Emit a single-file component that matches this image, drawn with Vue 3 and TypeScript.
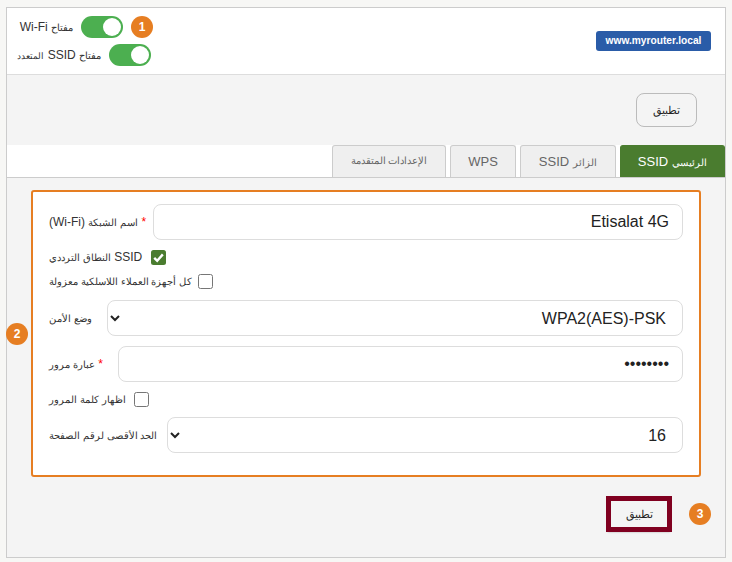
<script setup lang="ts">
const tabs: { ar: string; latin: string; active?: boolean; cls: string }[] = [
  { ar: 'الإعدادات المتقدمة', latin: '', cls: 'tab-adv' },
  { ar: '', latin: 'WPS', cls: 'tab-wps' },
  { ar: 'الزائر', latin: 'SSID', cls: 'tab-guest' },
  { ar: 'الرئيسي', latin: 'SSID', active: true, cls: 'tab-main' },
]
</script>

<template>
  <div class="card">
    <header class="head">
      <div class="switches">
        <div class="switch-row">
          <span class="sw-label sw-a" dir="rtl"><span class="ar">مفتاح</span> Wi-Fi</span>
          <span class="toggle"><span class="knob"></span></span>
          <span class="badge">1</span>
        </div>
        <div class="switch-row">
          <span class="sw-label sw-b" dir="rtl"><span class="ar">مفتاح</span> SSID <span class="ar-narrow">المتعدد</span></span>
          <span class="toggle"><span class="knob"></span></span>
        </div>
      </div>
      <span class="pill">www.myrouter.local</span>
    </header>

    <div class="top-actions">
      <button class="btn" type="button"><span class="ar-btn">تطبيق</span></button>
    </div>

    <nav class="tabs">
      <div v-for="t in tabs" :key="t.cls" class="tab" :class="[t.cls, { active: t.active }]" dir="rtl">
        <span v-if="t.ar" class="ar">{{ t.ar }}</span>
        <span v-if="t.latin">{{ t.latin }}</span>
      </div>
    </nav>

    <section class="form">
      <span class="badge badge-2">2</span>

      <div class="row">
        <label class="lab lab-name" dir="rtl"><span class="star">*</span> <span class="ar">اسم الشبكة</span> (Wi-Fi)</label>
        <input class="field" dir="ltr" type="text" value="Etisalat 4G" />
      </div>

      <div class="check-row first">
        <span class="lab lab-band" dir="rtl">SSID <span class="ar">النطاق الترددي</span></span>
        <span class="check on">
          <svg viewBox="0 0 15 15" width="15" height="15"><path d="M3.2 7.8 6.2 10.8 11.8 4.4" fill="none" stroke="#fff" stroke-width="2.4" /></svg>
        </span>
      </div>

      <div class="check-row second">
        <span class="lab lab-iso ar" dir="rtl">كل أجهزة العملاء اللاسلكية معزولة</span>
        <span class="check"></span>
      </div>

      <div class="row">
        <label class="lab lab-sec ar" dir="rtl">وضع الأمن</label>
        <select class="field sel" dir="rtl"><option>WPA2(AES)-PSK</option></select>
      </div>

      <div class="row">
        <label class="lab lab-pass" dir="rtl"><span class="star">*</span> <span class="ar">عبارة مرور</span></label>
        <input class="field" type="password" value="12345678" />
      </div>

      <div class="check-row">
        <span class="lab lab-show ar" dir="rtl">اظهار كلمة المرور</span>
        <span class="check"></span>
      </div>

      <div class="row">
        <label class="lab lab-max ar" dir="rtl">الحد الأقصى لرقم الصفحة</label>
        <select class="field sel" dir="rtl"><option>16</option></select>
      </div>
    </section>

    <div class="foot">
      <button class="btn-focus" type="button"><span class="ar-btn">تطبيق</span></button>
      <span class="badge">3</span>
    </div>
  </div>
</template>

<style>
html, body { margin: 0; background: #f7f7f5; }
</style>

<style scoped>
.card {
  box-sizing: border-box;
  width: 720px;
  height: 551px;
  margin: 7px 0 0 6px;
  border: 1px solid #ccc;
  background: #f4f4f4;
  font-family: "Liberation Sans", Arial, sans-serif;
  font-size: 12px;
  color: #333;
}
.ar { font-size: 10.2px; }
.ar-narrow { font-size: 8.8px; }
.ar-btn { font-size: 11px; }
.head {
  box-sizing: border-box;
  height: 67px;
  padding: 8px 14px;
  display: flex;
  align-items: center;
  justify-content: space-between;
  background: #fff;
  border-bottom: 1px solid #ddd;
}
.switches { display: flex; flex-direction: column; gap: 6px; }
.switch-row { display: flex; align-items: center; height: 22px; gap: 8px; }
.sw-label { text-align: left; white-space: nowrap; line-height: 14px; }
.sw-a { width: 52px; }
.sw-b { width: 80px; }
.toggle {
  box-sizing: border-box;
  width: 42px;
  height: 22px;
  padding: 2px;
  border-radius: 11px;
  background: #4caf50;
  display: flex;
  justify-content: flex-end;
}
.knob { width: 18px; height: 18px; border-radius: 50%; background: #fff; }
.badge {
  width: 22px;
  height: 22px;
  border-radius: 50%;
  background: #e67e22;
  color: #fff;
  font-weight: 700;
  font-size: 12px;
  display: flex;
  align-items: center;
  justify-content: center;
  flex: none;
}
.pill {
  box-sizing: border-box;
  width: 115px;
  height: 20px;
  margin-top: -1px;
  border-radius: 3px;
  background: #2a5ca8;
  color: #fff;
  font-weight: 700;
  font-size: 10.2px;
  line-height: 20px;
  text-align: center;
  white-space: nowrap;
}
.top-actions {
  box-sizing: border-box;
  height: 70px;
  padding: 18px 28px 0 0;
  display: flex;
  justify-content: flex-end;
  align-items: flex-start;
}
.btn {
  box-sizing: border-box;
  width: 61px;
  height: 34px;
  border: 1px solid #bbb;
  border-radius: 8px;
  background: #f4f4f4;
  color: #222;
  font: 12px "Liberation Sans", Arial, sans-serif;
  padding: 0;
}
.tabs {
  box-sizing: border-box;
  height: 33px;
  background: #fff;
  border-bottom: 1px solid #ccc;
  display: flex;
  justify-content: flex-end;
  gap: 4px;
}
.tab {
  box-sizing: border-box;
  height: 32px;
  background: #efefef;
  border: 1px solid #ccc;
  border-bottom: none;
  border-radius: 3px 3px 0 0;
  color: #666;
  font-size: 13px;
  display: flex;
  align-items: baseline;
  padding-top: 8px;
  gap: 4px;
  justify-content: center;
  white-space: nowrap;
}
.tab-adv { width: 114px; padding-top: 9px; }
.tab-wps { width: 66px; }
.tab-guest { width: 96px; }
.tab-main { width: 105px; }
.tab.active { background: #4a7c2f; border-color: #4a7c2f; color: #fff; }
.form {
  position: relative;
  box-sizing: border-box;
  width: 670px;
  height: 287px;
  margin: 12px 0 0 24px;
  padding: 12px 16px 0;
  background: #fff;
  border: 2px solid #e67e22;
  border-radius: 3px;
  display: flex;
  flex-direction: column;
  gap: 10px;
}
.badge-2 { position: absolute; left: -27px; top: 131px; }
.row { display: flex; align-items: center; height: 36px; }
.lab { white-space: nowrap; text-align: left; flex: none; line-height: 15px; }
.lab-name { width: 104px; }
.lab-sec { width: 58px; }
.lab-pass { width: 69px; }
.lab-max { width: 118px; }
.lab-band { width: 97px; }
.lab-iso { width: 144px; }
.lab-show { width: 80px; }
.star { color: #f00; }
.field {
  flex: 1;
  min-width: 0;
  box-sizing: border-box;
  height: 36px;
  border: 1px solid #ddd;
  border-radius: 8px;
  background: #fff;
  color: #222;
  font: 16px "Liberation Sans", Arial, sans-serif;
  text-align: right;
  padding: 0 13px;
  outline: none;
}
.sel { padding: 0 12px 0 0; }
.check-row { display: flex; align-items: flex-start; gap: 5px; height: 15px; }
.check-row.first { height: 14px; }
.check-row.second { height: 16px; }
.check {
  box-sizing: border-box;
  width: 15px;
  height: 15px;
  border: 1px solid #767676;
  border-radius: 2.5px;
  background: #fff;
  flex: none;
}
.check.on { background: #4a7c2f; border: none; }
.check svg { display: block; }
.foot {
  margin-top: 19px;
  padding-right: 14px;
  display: flex;
  justify-content: flex-end;
  align-items: center;
  gap: 17px;
}
.btn-focus {
  box-sizing: border-box;
  width: 66px;
  height: 36px;
  border: 5px solid #800020;
  background: #f4f4f4;
  color: #222;
  font: 12px "Liberation Sans", Arial, sans-serif;
  padding: 0;
  box-shadow: 0 2px 2px -2px rgba(0, 0, 0, 0.3);
}
</style>
